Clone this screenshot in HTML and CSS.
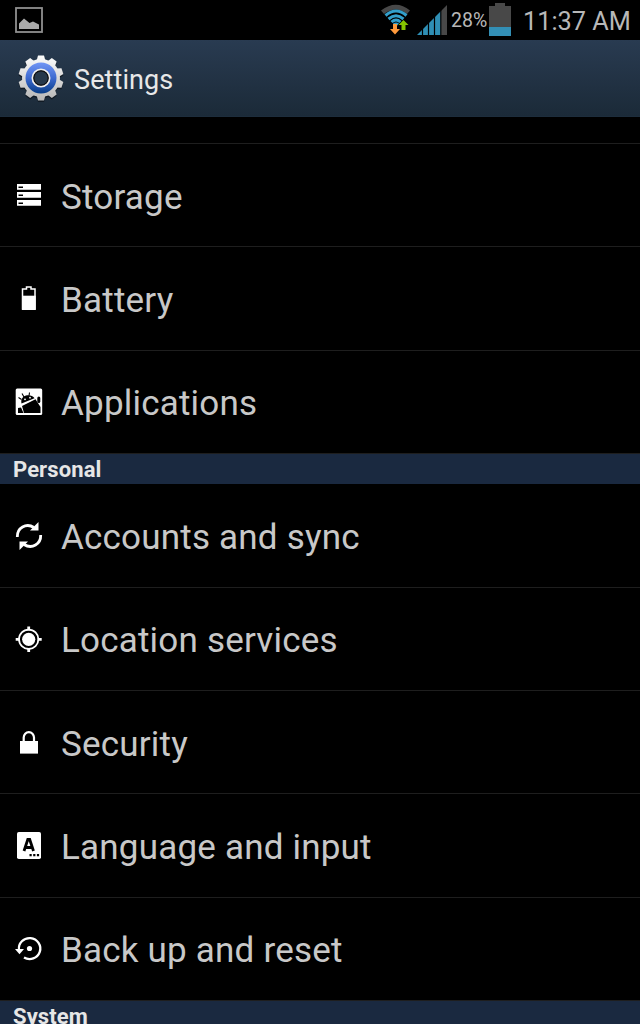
FILE: index.html
```html
<!DOCTYPE html>
<html lang="en">
<head>
    <meta charset="UTF-8">
    <meta name="viewport" content="width=device-width, initial-scale=1.0">
    <title>Settings</title>
    <link rel="stylesheet" href="styles.css">
</head>
<body>
    <div class="statusbar">
        <svg class="picture" width="28" height="26" viewBox="0 0 28 26">
            <rect x="1" y="1" width="26" height="24" fill="none" stroke="#909090" stroke-width="1.800"/>
            <path d="M4 22V16.500L9 11.500L14.500 16L18 14.500L24 17.500V22Z" fill="#aaa"/>
        </svg>
        <div class="status-right">
            <svg class="wifi" width="30" height="32" viewBox="0 0 30 32">
                <path d="M0 6.500Q15 -5 29 6.500L26 10Q15 1 3 10Z" fill="#484848"/>
                <g fill="none" stroke="#33a0cc" stroke-width="3">
                    <path d="M4.500 11.500Q15 2.500 25.500 11.500"/>
                    <path d="M7.500 15Q15 8.500 22.500 15"/>
                    <path d="M10.500 18Q15 14 19.500 18"/>
                </g>
                <path d="M12 19.500Q15 17.500 18 19.500L15 23Z" fill="#33a0cc"/>
                <path d="M12 20H16V25H19L14 30.500L9 25H12Z" fill="#ff9a3c"/>
                <path d="M20.500 26V21H17.500L22.500 16L27.500 21H24.500V26Z" fill="#85c400"/>
            </svg>
            <svg class="signal" width="30" height="30" viewBox="0 0 30 30">
                <path d="M0 30L24 6V30Z" fill="#2f8fb5"/>
                <path d="M24 6L30 0V30H24Z" fill="#484848"/>
                <path d="M5.500 22V30M11.500 16V30M17.500 10V30M23.800 4V30" stroke="#000" stroke-width="1.200"/>
            </svg>
            <span class="percent">28%</span>
            <svg class="battery" width="22" height="33" viewBox="0 0 22 33">
                <path d="M0 3H6V0H16V3H22V24H0Z" fill="#484848"/>
                <rect y="24" width="22" height="9" fill="#338fb5"/>
            </svg>
            <span class="clock">11:37 AM</span>
        </div>
    </div>

    <div class="header">
        <svg class="gear" width="48" height="50" viewBox="-24 -24 48 50">
            <defs>
                <linearGradient id="metal" x1="0" y1="0" x2="0" y2="1">
                    <stop offset="0" stop-color="#fff"/>
                    <stop offset="1" stop-color="#b4b4b4"/>
                </linearGradient>
                <linearGradient id="blue" x1="0" y1="0" x2="0" y2="1">
                    <stop offset="0" stop-color="#7296f5"/>
                    <stop offset="0.500" stop-color="#3d6ad0"/>
                    <stop offset="1" stop-color="#073c86"/>
                </linearGradient>
                <g id="teeth">
                    <path id="tooth" d="M-4.500 -17L-3 -22.500H3L4.500 -17V17L3 22.500H-3L-4.500 17Z"/>
                    <use href="#tooth" transform="rotate(36)"/>
                    <use href="#tooth" transform="rotate(72)"/>
                    <use href="#tooth" transform="rotate(108)"/>
                    <use href="#tooth" transform="rotate(144)"/>
                    <circle r="19"/>
                </g>
                <mask id="gearMask" maskUnits="userSpaceOnUse" x="-24" y="-24" width="48" height="50">
                    <use href="#teeth" fill="#fff"/>
                </mask>
            </defs>
            <use href="#teeth" y="1.500" fill="#111a24"/>
            <rect x="-24" y="-24" width="48" height="48" fill="url(#metal)" mask="url(#gearMask)"/>
            <circle r="15.500" fill="url(#blue)"/>
            <circle r="8.500" fill="#26384a" stroke="#eee" stroke-width="2"/>
            <circle r="7.200" fill="#26384a" stroke="#111" stroke-width="1.200"/>
        </svg>
        <h1>Settings</h1>
    </div>

    <div class="list">
        <div class="item partial"></div>
        <div class="item">
            <svg class="icon" viewBox="0 0 32 32">
                <path d="M5 4H29V9.700H5ZM5 12H29V17.700H5ZM5 20H29V25.700H5Z" fill="#fff"/>
                <path d="M6.500 7.200H11M6.500 15.200H11M6.500 23.200H11" stroke="#000" stroke-width="1.600"/>
            </svg>
            <span>Storage</span>
        </div>
        <div class="item">
            <svg class="icon" viewBox="0 0 32 32">
                <path d="M10.500 26V6H14.500V4H19V6H23V26Z" fill="none" stroke="#fff" stroke-width="1.500"/>
                <rect x="10" y="12.700" width="13.700" height="14.300" fill="#fff"/>
            </svg>
            <span>Battery</span>
        </div>
        <div class="item">
            <svg class="icon" viewBox="0 0 32 32">
                <rect x="3.700" y="1.500" width="26.500" height="26.500" rx="1.500" fill="#fff"/>
                <path d="M9.500 16.500C8.500 12.500 10.500 9.500 14 8.500C17.500 7.800 21.300 9 22.500 11.200Z"/>
                <path d="M10 19L23.500 12.300L28.500 20V26H12Z"/>
                <path d="M6 21L9 20.500L11.500 26H6Z"/>
                <rect x="25.300" y="9.500" width="3" height="6.500" rx="1.500"/>
                <path d="M12 10L10 6.500M17 9L17.500 5.500M6.500 10.500L9.500 12.500" stroke="#000" stroke-width="1.100"/>
                <circle cx="13" cy="12.300" r="0.900" fill="#fff"/>
                <circle cx="18" cy="10.700" r="0.900" fill="#fff"/>
            </svg>
            <span>Applications</span>
        </div>

        <h2>Personal</h2>

        <div class="item">
            <svg class="icon" viewBox="0 0 32 32">
                <g id="syncArrow">
                    <path d="M5.300 16C5 7 14 1.500 22 6.500" fill="none" stroke="#fff" stroke-width="2.800"/>
                    <path d="M26.500 1V9.500H18Z" fill="#fff"/>
                </g>
                <use href="#syncArrow" transform="rotate(180 17 15)"/>
            </svg>
            <span>Accounts and sync</span>
        </div>
        <div class="item">
            <svg class="icon" viewBox="0 0 32 32">
                <circle cx="16.700" cy="15.300" r="6.600" fill="#fff"/>
                <circle cx="16.700" cy="15.300" r="9.700" fill="none" stroke="#fff" stroke-width="1.800"/>
                <path d="M16.700 2.500V6.500M16.700 24V28M3.700 15.300H7.700M25.700 15.300H29.700" stroke="#fff" stroke-width="2.800"/>
            </svg>
            <span>Location services</span>
        </div>
        <div class="item">
            <svg class="icon" viewBox="0 0 32 32">
                <rect x="8" y="14" width="18" height="12.600" fill="#fff"/>
                <path d="M11.700 16V10.500A5 5.300 0 0 1 22 10.500V16" fill="none" stroke="#fff" stroke-width="2.200"/>
            </svg>
            <span>Security</span>
        </div>
        <div class="item">
            <svg class="icon" viewBox="0 0 32 32">
                <rect x="5" y="2" width="24" height="27" rx="1.800" fill="#fff"/>
                <path d="M12 21L15.800 9.500H17.700L21.500 21M13.500 17.500H20" fill="none" stroke="#000" stroke-width="2.800"/>
                <path d="M17.500 25.200H19.700M21.200 25.200H23.400M24.900 25.200H27.100" stroke="#000" stroke-width="2.200"/>
            </svg>
            <span>Language and input</span>
        </div>
        <div class="item">
            <svg class="icon" viewBox="0 0 32 32">
                <path d="M7 16A10.700 10.500 0 1 1 12 23.500" fill="none" stroke="#fff" stroke-width="2.300"/>
                <path d="M3 15H12L7.500 20.200Z" fill="#fff"/>
                <circle cx="17.500" cy="14.500" r="2.600" fill="#fff"/>
            </svg>
            <span>Back up and reset</span>
        </div>

        <h2>System</h2>
    </div>
</body>
</html>
```

FILE: styles.css
```css
* {
    box-sizing: border-box;
}
body {
    margin: 0;
    height: 1024px;
    overflow: hidden;
    background: #000;
    color: #c8c8c8;
    font-family: Roboto, "Liberation Sans", sans-serif;
}
.statusbar {
    display: flex;
    justify-content: space-between;
    height: 40px;
    padding: 0 10px 0 15px;
    color: #b8b8b8;
}
.picture {
    margin-top: 7px;
}
.status-right {
    display: flex;
    align-items: flex-start;
}
.wifi {
    margin: 4px 6px 0 0;
}
.signal {
    margin: 5px 4px 0 0;
}
.percent {
    width: 38px;
    font-size: 19.5px;
    line-height: 42px;
    white-space: nowrap;
}
.battery {
    margin: 3px 12px 0 0;
}
.clock {
    width: 107px;
    font-size: 25.3px;
    line-height: 43px;
    white-space: nowrap;
}
.header {
    display: flex;
    align-items: center;
    height: 77px;
    padding: 2px 0 0 17px;
    background: linear-gradient(#293b51, #1b2a38);
    border-bottom: 1px solid #1d2d3c;
}
.header h1 {
    margin: 2px 0 0 9px;
    color: #e8e8e8;
    font-size: 27px;
    font-weight: 400;
    letter-spacing: 0.1px;
}
.item {
    display: flex;
    align-items: center;
    height: 103.3px;
    padding: 2px 0 0 12px;
    border-bottom: 1px solid #1e1e1e;
    font-size: 35px;
    letter-spacing: 0.2px;
}
.item.partial {
    height: 27px;
}
.item span {
    padding-top: 2px;
}
.icon {
    width: 32px;
    height: 32px;
    margin-right: 17px;
}
h2 {
    height: 30.5px;
    margin: 0;
    padding-left: 13px;
    background: #1a2940;
    color: #e6e6e6;
    font-size: 22px;
    font-weight: 700;
    line-height: 32px;
    letter-spacing: 0.1px;
}
```
